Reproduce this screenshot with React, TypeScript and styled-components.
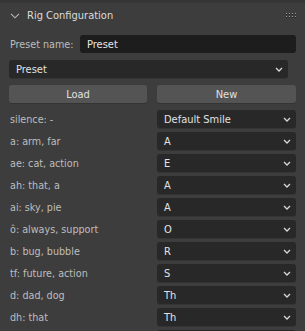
import React from 'react';
import styled, { createGlobalStyle } from 'styled-components';

const rows: [string, string][] = [
  ['silence: -', 'Default Smile'],
  ['a: arm, far', 'A'],
  ['ae: cat, action', 'E'],
  ['ah: that, a', 'A'],
  ['ai: sky, pie', 'A'],
  ['ô: always, support', 'O'],
  ['b: bug, bubble', 'R'],
  ['tf: future, action', 'S'],
  ['d: dad, dog', 'Th'],
  ['dh: that', 'Th'],
];

const Chevron: React.FC = () => (
  <ChevronSvg width="8" height="5" viewBox="0 0 8 5">
    <path d="M1 1 L4 4 L7 1" fill="none" stroke="#d8d8d8" strokeWidth="1.3" />
  </ChevronSvg>
);

const App: React.FC = () => {
  return (
    <>
      <GlobalStyle />
      <Panel>
        <TopStrip />
        <Header>
          <svg width="10" height="6" viewBox="0 0 10 6">
            <path d="M1 0.8 L5 4.8 L9 0.8" fill="none" stroke="#b8b8b8" strokeWidth="1.1" />
          </svg>
          <Title>Rig Configuration</Title>
          <Grip>
            {Array.from({ length: 8 }).map((_, i) => (
              <Dot key={i} />
            ))}
          </Grip>
        </Header>
        <Body>
          <NameRow>
            <Label>Preset name:</Label>
            <TextField>Preset</TextField>
          </NameRow>
          <Dropdown $inset>
            <span>Preset</span>
            <Chevron />
          </Dropdown>
          <ButtonRow>
            <Button>Load</Button>
            <Button>New</Button>
          </ButtonRow>
          <List>
            {rows.map(([label, value], i) => (
              <Row key={i}>
                <Label>{label}</Label>
                <Dropdown>
                  <span>{value}</span>
                  <Chevron />
                </Dropdown>
              </Row>
            ))}
            <Row>
              <span />
              <Dropdown />
            </Row>
          </List>
        </Body>
      </Panel>
    </>
  );
};

export default App;

const GlobalStyle = createGlobalStyle`
  html, body {
    margin: 0;
    padding: 0;
    background: #3d3d3d;
    overflow: hidden;
  }
  body {
    font-family: 'DejaVu Sans Condensed', 'DejaVu Sans', sans-serif;
    font-stretch: condensed;
    -webkit-font-smoothing: antialiased;
  }
`;

const Panel = styled.div`
  width: 305px;
  height: 331px;
  background: #3d3d3d;
  overflow: hidden;
`;

const TopStrip = styled.div`
  height: 2px;
  background: #353535;
  border-bottom: 1px solid #383838;
`;

const Header = styled.div`
  height: 25px;
  display: flex;
  align-items: center;
  padding: 0 8px 0 10px;
  gap: 7px;
  color: #dcdcdc;
`;

const Title = styled.span`
  font-size: 11px;
  flex: 1;
`;

const Grip = styled.div`
  display: grid;
  grid-template-columns: repeat(4, 1px);
  grid-template-rows: repeat(2, 1px);
  column-gap: 2px;
  row-gap: 2px;
  margin-right: 1px;
  margin-top: -2px;
`;

const Dot = styled.div`
  width: 1px;
  height: 1px;
  background: #9a9a9a;
  box-shadow: 0 1px 0 #222;
`;

const Body = styled.div`
  padding: 7px 9px 0 9px;
  display: flex;
  flex-direction: column;
`;

const NameRow = styled.div`
  display: grid;
  grid-template-columns: 71px 1fr;
  align-items: center;
  height: 18px;
`;

const Label = styled.span`
  font-size: 10.7px;
  color: #bebebe;
  padding-left: 1px;
  white-space: nowrap;
`;

const TextField = styled.div`
  height: 18px;
  background: #1d1d1d;
  border-radius: 3px;
  color: #e6e6e6;
  font-size: 11px;
  display: flex;
  align-items: center;
  padding-left: 7px;
`;

const Dropdown = styled.div<{ $inset?: boolean }>`
  height: 18px;
  box-sizing: border-box;
  background: #282828;
  border-radius: 3px;
  color: #e2e2e2;
  font-size: 11px;
  display: flex;
  align-items: center;
  justify-content: space-between;
  padding: 0 5px 0 7px;
  margin-right: ${(p) => (p.$inset ? '8px' : '0')};
  margin-top: ${(p) => (p.$inset ? '7px' : '0')};
  box-shadow: 0 1px 0 #343434;
`;

const ChevronSvg = styled.svg`
  flex: none;
`;

const ButtonRow = styled.div`
  display: grid;
  grid-template-columns: 138px 139px;
  justify-content: space-between;
  margin-top: 7px;
`;

const Button = styled.div`
  height: 18px;
  background: #545454;
  border-radius: 3px;
  color: #e0e0e0;
  font-size: 11px;
  display: flex;
  align-items: center;
  justify-content: center;
  box-shadow: 0 1px 0 #343434;
`;

const List = styled.div`
  margin-top: 7px;
  display: flex;
  flex-direction: column;
  gap: 4px;
`;

const Row = styled.div`
  display: grid;
  grid-template-columns: 1fr 139px;
  align-items: center;
  height: 18px;
`;
